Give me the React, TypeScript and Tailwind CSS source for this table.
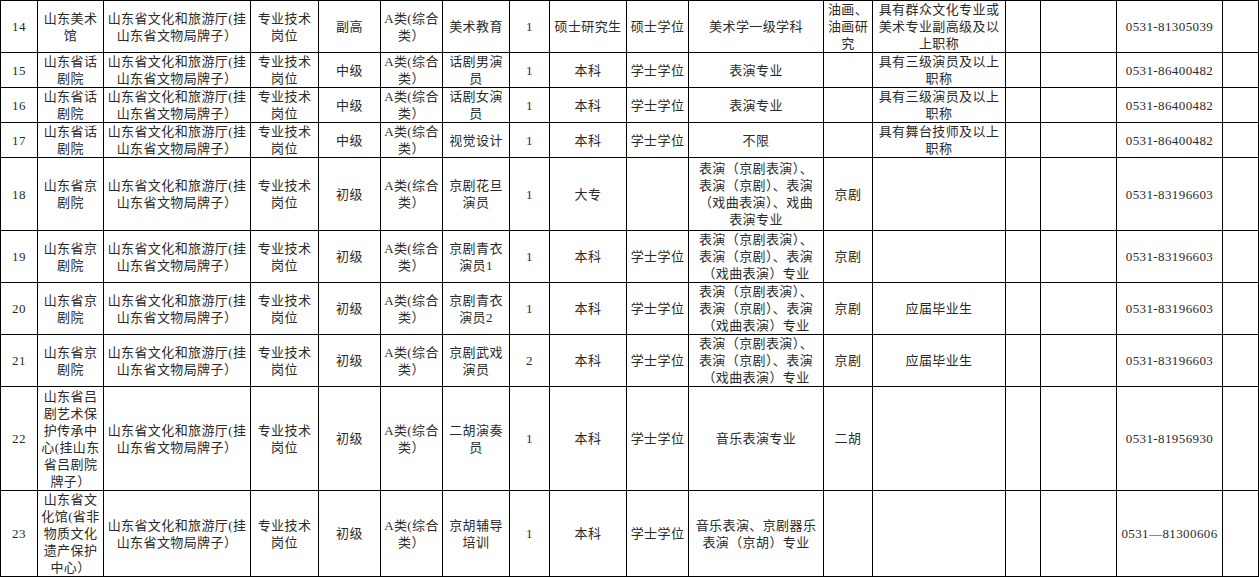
import React from 'react';

type Row = {
  idx: string;
  unit: string[];
  level: string;
  name: string[];
  n: string;
  edu: string;
  deg: string;
  major: string[];
  dir: string[];
  req: string[];
  phone: string;
  h: string;
};

const DEPT = ['山东省文化和旅游厅(挂', '山东省文物局牌子）'];
const POST = ['专业技术', '岗位'];
const CAT = ['A类(综合', '类）'];

const JINGJU = ['表演（京剧表演）、', '表演（京剧）、表演', '（戏曲表演）专业'];

const rows: Row[] = [
  {
    idx: '14', unit: ['山东美术', '馆'], level: '副高', name: ['美术教育'], n: '1',
    edu: '硕士研究生', deg: '硕士学位', major: ['美术学一级学科'], dir: ['油画、', '油画研', '究'],
    req: ['具有群众文化专业或', '美术专业副高级及以', '上职称'], phone: '0531-81305039', h: 'h-[52px]',
  },
  {
    idx: '15', unit: ['山东省话', '剧院'], level: '中级', name: ['话剧男演', '员'], n: '1',
    edu: '本科', deg: '学士学位', major: ['表演专业'], dir: [],
    req: ['具有三级演员及以上', '职称'], phone: '0531-86400482', h: 'h-[35px]',
  },
  {
    idx: '16', unit: ['山东省话', '剧院'], level: '中级', name: ['话剧女演', '员'], n: '1',
    edu: '本科', deg: '学士学位', major: ['表演专业'], dir: [],
    req: ['具有三级演员及以上', '职称'], phone: '0531-86400482', h: 'h-[35px]',
  },
  {
    idx: '17', unit: ['山东省话', '剧院'], level: '中级', name: ['视觉设计'], n: '1',
    edu: '本科', deg: '学士学位', major: ['不限'], dir: [],
    req: ['具有舞台技师及以上', '职称'], phone: '0531-86400482', h: 'h-[35px]',
  },
  {
    idx: '18', unit: ['山东省京', '剧院'], level: '初级', name: ['京剧花旦', '演员'], n: '1',
    edu: '大专', deg: '', major: ['表演（京剧表演）、', '表演（京剧）、表演', '（戏曲表演）、戏曲', '表演专业'],
    dir: ['京剧'], req: [], phone: '0531-83196603', h: 'h-[73px]',
  },
  {
    idx: '19', unit: ['山东省京', '剧院'], level: '初级', name: ['京剧青衣', '演员1'], n: '1',
    edu: '本科', deg: '学士学位', major: JINGJU, dir: ['京剧'], req: [], phone: '0531-83196603', h: 'h-[52px]',
  },
  {
    idx: '20', unit: ['山东省京', '剧院'], level: '初级', name: ['京剧青衣', '演员2'], n: '1',
    edu: '本科', deg: '学士学位', major: JINGJU, dir: ['京剧'], req: ['应届毕业生'], phone: '0531-83196603', h: 'h-[52px]',
  },
  {
    idx: '21', unit: ['山东省京', '剧院'], level: '初级', name: ['京剧武戏', '演员'], n: '2',
    edu: '本科', deg: '学士学位', major: JINGJU, dir: ['京剧'], req: ['应届毕业生'], phone: '0531-83196603', h: 'h-[52px]',
  },
  {
    idx: '22', unit: ['山东省吕', '剧艺术保', '护传承中', '心(挂山东', '省吕剧院', '牌子）'], level: '初级',
    name: ['二胡演奏', '员'], n: '1', edu: '本科', deg: '学士学位', major: ['音乐表演专业'], dir: ['二胡'],
    req: [], phone: '0531-81956930', h: 'h-[104px]',
  },
  {
    idx: '23', unit: ['山东省文', '化馆(省非', '物质文化', '遗产保护', '中心）'], level: '初级',
    name: ['京胡辅导', '培训'], n: '1', edu: '本科', deg: '学士学位', major: ['音乐表演、京剧器乐', '表演（京胡）专业'],
    dir: [], req: [], phone: '0531—81300606', h: 'h-[86px]',
  },
];

const Lines: React.FC<{ lines: string[] }> = ({ lines }) => (
  <>
    {lines.map((l, i) => (
      <div key={i}>{l}</div>
    ))}
  </>
);

const Cell: React.FC<{ children?: React.ReactNode }> = ({ children }) => (
  <td className="border border-black p-0 text-center align-middle whitespace-nowrap">{children}</td>
);

export default function App() {
  return (
    <div className="w-[1259px] h-[578px] bg-white overflow-hidden">
      <table className="table-fixed border-collapse w-[1258px] text-[13px] leading-[17px] tracking-[0.4px] text-[#2a2a2a] font-['Liberation_Serif','Noto_Sans_CJK_SC',serif] border-l border-l-[#cfcfcf]">
        <colgroup>
          <col className="w-[37px]" />
          <col className="w-[66px]" />
          <col className="w-[147px]" />
          <col className="w-[68px]" />
          <col className="w-[62px]" />
          <col className="w-[62px]" />
          <col className="w-[67px]" />
          <col className="w-[40px]" />
          <col className="w-[77px]" />
          <col className="w-[62px]" />
          <col className="w-[135px]" />
          <col className="w-[49px]" />
          <col className="w-[133px]" />
          <col className="w-[35px]" />
          <col className="w-[76px]" />
          <col className="w-[106px]" />
          <col className="w-[36px]" />
        </colgroup>
        <tbody>
          {rows.map(r => (
            <tr key={r.idx} className={r.h}>
              <Cell>{r.idx}</Cell>
              <Cell><Lines lines={r.unit} /></Cell>
              <Cell><Lines lines={DEPT} /></Cell>
              <Cell><Lines lines={POST} /></Cell>
              <Cell>{r.level}</Cell>
              <Cell><Lines lines={CAT} /></Cell>
              <Cell><Lines lines={r.name} /></Cell>
              <Cell>{r.n}</Cell>
              <Cell>{r.edu}</Cell>
              <Cell>{r.deg}</Cell>
              <Cell><Lines lines={r.major} /></Cell>
              <Cell><Lines lines={r.dir} /></Cell>
              <Cell><Lines lines={r.req} /></Cell>
              <Cell />
              <Cell />
              <Cell>{r.phone}</Cell>
              <Cell />
            </tr>
          ))}
        </tbody>
      </table>
    </div>
  );
}
